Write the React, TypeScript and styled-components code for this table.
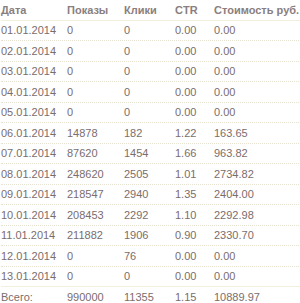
import { createGlobalStyle } from "styled-components";
import styled from "styled-components";

const GlobalStyle = createGlobalStyle`
  html, body {
    margin: 0;
    padding: 0;
    background: #ffffff;
  }
`;

const Table = styled.div`
  width: 300px;
  padding: 0 0 0 1px;
  font-family: "Liberation Sans", Arial, sans-serif;
  font-size: 11px;
  color: #7a6d6d;
`;

const Row = styled.div<{ $line: "solid" | "dotted" | "none" }>`
  display: grid;
  grid-template-columns: 66px 57px 51px 39px 1fr;
  align-items: center;
  height: 19.5px;
  border-bottom: ${({ $line }) =>
    $line === "solid" ? "1px solid #f2efdc" : $line === "dotted" ? "1px dotted #e6e2d2" : "none"};
`;

const HeadCell = styled.div`
  font-weight: bold;
  color: #8a7e7e;
  white-space: nowrap;
`;

const Cell = styled.div`
  white-space: nowrap;
`;

const rows = [
  ["01.01.2014", "0", "0", "0.00", "0.00"],
  ["02.01.2014", "0", "0", "0.00", "0.00"],
  ["03.01.2014", "0", "0", "0.00", "0.00"],
  ["04.01.2014", "0", "0", "0.00", "0.00"],
  ["05.01.2014", "0", "0", "0.00", "0.00"],
  ["06.01.2014", "14878", "182", "1.22", "163.65"],
  ["07.01.2014", "87620", "1454", "1.66", "963.82"],
  ["08.01.2014", "248620", "2505", "1.01", "2734.82"],
  ["09.01.2014", "218547", "2940", "1.35", "2404.00"],
  ["10.01.2014", "208453", "2292", "1.10", "2292.98"],
  ["11.01.2014", "211882", "1906", "0.90", "2330.70"],
  ["12.01.2014", "0", "76", "0.00", "0.00"],
  ["13.01.2014", "0", "0", "0.00", "0.00"],
];

export default function App() {
  return (
    <>
      <GlobalStyle />
      <Table>
        <Row $line="solid">
          <HeadCell>Дата</HeadCell>
          <HeadCell>Показы</HeadCell>
          <HeadCell>Клики</HeadCell>
          <HeadCell>CTR</HeadCell>
          <HeadCell>Стоимость руб.</HeadCell>
        </Row>
        {rows.map((r, i) => (
          <Row key={r[0]} $line={i === rows.length - 1 ? "solid" : "dotted"}>
            {r.map((v, j) => (
              <Cell key={j}>{v}</Cell>
            ))}
          </Row>
        ))}
        <Row $line="none">
          <Cell>Всего:</Cell>
          <Cell>990000</Cell>
          <Cell>11355</Cell>
          <Cell>1.15</Cell>
          <Cell>10889.97</Cell>
        </Row>
      </Table>
    </>
  );
}
